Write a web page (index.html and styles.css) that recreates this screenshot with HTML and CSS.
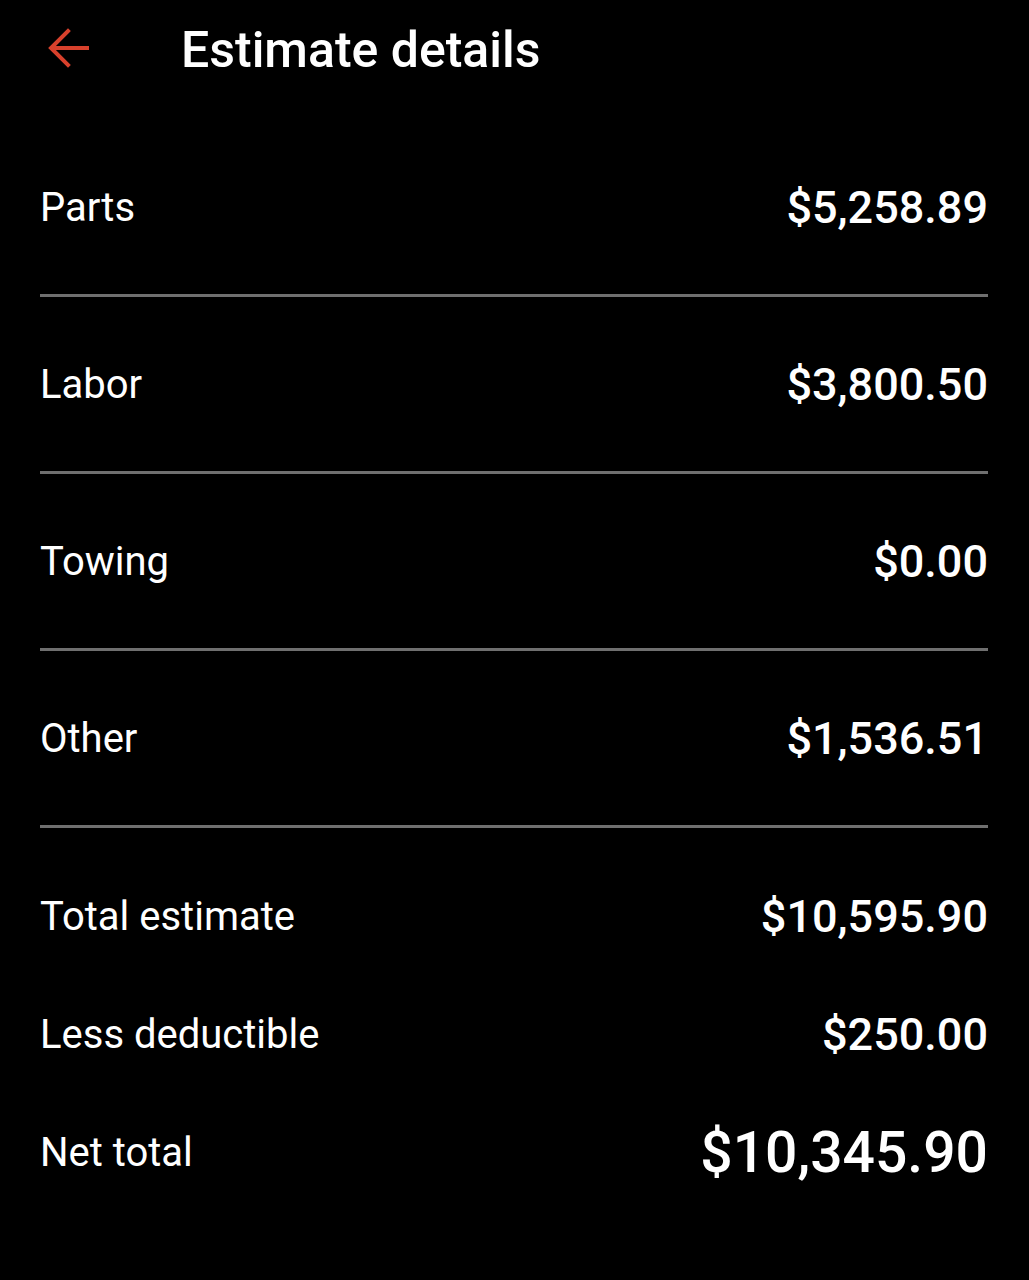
FILE: index.html
```html
<!DOCTYPE html>
<html lang="en">
<head>
<meta charset="utf-8">
<title>Estimate details</title>
<link rel="stylesheet" href="styles.css">
</head>
<body>
<div class="screen">
  <header class="appbar">
    <button class="back" aria-label="Back">
      <svg width="44" height="44" viewBox="0 0 44 44" fill="none" stroke="#d8412c" stroke-width="4" stroke-linecap="square">
        <path d="M41 22H7"/>
        <path d="M22 5L5 22L22 39" stroke-linejoin="miter"/>
      </svg>
    </button>
    <h1 class="title">Estimate details</h1>
  </header>

  <section class="items">
    <div class="row item"><span class="label">Parts</span><span class="value">$5,258.89</span></div>
    <div class="row item"><span class="label">Labor</span><span class="value">$3,800.50</span></div>
    <div class="row item"><span class="label">Towing</span><span class="value">$0.00</span></div>
    <div class="row item"><span class="label">Other</span><span class="value">$1,536.51</span></div>
  </section>

  <section class="totals">
    <div class="row total"><span class="label">Total estimate</span><span class="value">$10,595.90</span></div>
    <div class="row total"><span class="label">Less deductible</span><span class="value">$250.00</span></div>
    <div class="row total"><span class="label">Net total</span><span class="value big">$10,345.90</span></div>
  </section>
</div>
</body>
</html>
```
FILE: styles.css
```css
html, body {
  margin: 0;
  padding: 0;
  background: #000;
}
body {
  font-family: Roboto, "Noto Sans", "Liberation Sans", sans-serif;
  color: #fff;
  width: 1029px;
  height: 1280px;
  overflow: hidden;
}
.screen {
  padding: 0 41px 0 40px;
}
.appbar {
  height: 96px;
  display: flex;
  align-items: center;
}
.back {
  background: none;
  border: 0;
  padding: 0;
  margin: 0 0 0 6px;
  width: 44px;
  height: 44px;
  display: flex;
  align-items: center;
  justify-content: center;
}
.back svg {
  display: block;
}
.title {
  margin: 4px 0 0 91px;
  font-size: 50px;
  font-weight: 500;
  letter-spacing: 0;
  line-height: 1;
}
.items {
  padding-top: 24px;
}
.row {
  display: flex;
  justify-content: space-between;
  align-items: center;
}
.item {
  height: 174px;
  border-bottom: 3px solid #6f6f6f;
}
.totals {
  padding-top: 29px;
}
.total {
  height: 118px;
}
.label {
  font-size: 40px;
  font-weight: 400;
}
.value {
  font-size: 45px;
  font-weight: 500;
}
.value.big {
  font-size: 57px;
}
```
